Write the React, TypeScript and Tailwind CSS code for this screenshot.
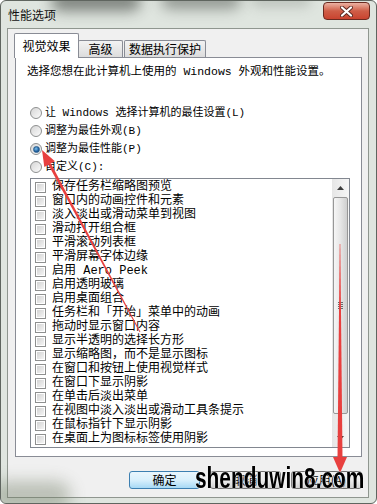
import React from "react";

const ITEMS = [
  "保存任务栏缩略图预览",
  "窗口内的动画控件和元素",
  "淡入淡出或滑动菜单到视图",
  "滑动打开组合框",
  "平滑滚动列表框",
  "平滑屏幕字体边缘",
  "启用 Aero Peek",
  "启用透明玻璃",
  "启用桌面组合",
  "任务栏和「开始」菜单中的动画",
  "拖动时显示窗口内容",
  "显示半透明的选择长方形",
  "显示缩略图，而不是显示图标",
  "在窗口和按钮上使用视觉样式",
  "在窗口下显示阴影",
  "在单击后淡出菜单",
  "在视图中淡入淡出或滑动工具条提示",
  "在鼠标指针下显示阴影",
  "在桌面上为图标标签使用阴影",
];

const RADIOS = [
  { label: "让 Windows 选择计算机的最佳设置(L)", checked: false },
  { label: "调整为最佳外观(B)", checked: false },
  { label: "调整为最佳性能(P)", checked: true },
  { label: "自定义(C):", checked: false },
];

function Radio({ checked }: { checked: boolean }) {
  return (
    <div className="w-[12px] h-[12px] rounded-full border border-[#8e9090] bg-gradient-to-br from-[#d6d6d6] to-[#fbfbfb] flex items-center justify-center shrink-0">
      {checked && (
        <div className="w-[7px] h-[7px] rounded-full bg-[radial-gradient(circle_at_40%_35%,#7fc3ef,#1f5f9e_60%,#123f70)] border border-[#2a5f8f]" />
      )}
    </div>
  );
}

function Checkbox() {
  return (
    <div className="w-[11px] h-[11px] border border-[#8e8f8f] bg-white p-[1px] shrink-0">
      <div className="w-full h-full bg-gradient-to-br from-[#d3d3d3] to-[#f4f4f4]" />
    </div>
  );
}

function Button({ label, primary }: { label: string; primary?: boolean }) {
  return (
    <div
      className={
        primary
          ? "w-[71px] h-[18px] rounded-[3px] border border-[#3c7fb1] bg-gradient-to-b from-[#eaf6fd] via-[#d9f0fc] to-[#a7d9f5] flex items-center justify-center text-[12px] leading-none"
          : "w-[71px] h-[18px] rounded-[3px] border border-[#707070] bg-gradient-to-b from-[#f2f2f2] via-[#ebebeb] to-[#cfcfcf] flex items-center justify-center text-[12px] leading-none"
      }
    >
      {label}
    </div>
  );
}

export default function App() {
  return (
    <div className="relative w-[377px] h-[504px] overflow-hidden rounded-[6px] border border-[#5f655f] bg-[#dfe5df] text-black font-['Liberation_Mono','Noto_Sans_CJK_SC',monospace]">
      {/* blurred glass behind the title */}
      <div className="absolute left-[50px] -top-[10px] w-[90px] h-[20px] rounded-full bg-[#3d423d] opacity-60 blur-[7px]" />
      <div className="absolute left-[160px] -top-[10px] w-[80px] h-[18px] rounded-full bg-[#454a45] opacity-50 blur-[7px]" />
      <div className="absolute left-[250px] -top-[8px] w-[60px] h-[14px] rounded-full bg-[#8a908a] opacity-40 blur-[6px]" />
      <div className="absolute -left-[10px] top-[480px] w-[80px] h-[30px] rounded-full bg-[#6e7a62] opacity-40 blur-[8px]" />

      {/* title bar */}
      <div className="relative h-[27px] flex items-start">
        <span className="ml-[7px] mt-[6px] text-[12px] leading-[16px] font-['Noto_Sans_CJK_SC',sans-serif] text-[#111]">
          性能选项
        </span>
        <div className="ml-auto mr-[6px] mt-[1px] w-[47px] h-[18px] rounded-[4px] border border-[#6b2a20] bg-gradient-to-b from-[#eab1a2] via-[#cf5d47] to-[#c9432f] flex items-center justify-center">
          <svg width="13" height="11" viewBox="0 0 13 11">
            <path
              d="M2 1.5 L11 9.5 M11 1.5 L2 9.5"
              stroke="#5a2a22"
              strokeWidth="4"
              strokeLinecap="round"
            />
            <path
              d="M2 1.5 L11 9.5 M11 1.5 L2 9.5"
              stroke="#ffffff"
              strokeWidth="2.2"
              strokeLinecap="round"
            />
          </svg>
        </div>
      </div>

      {/* dialog body */}
      <div className="ml-[6px] w-[362px] h-[470px] bg-[#f0f0f0] border border-[#8f968f] pl-[7px] pr-[6px] pt-[4px] flex flex-col">
        {/* tabs */}
        <div className="flex items-end h-[24px] text-[12px] font-['Noto_Sans_CJK_SC',sans-serif]">
          <div className="relative z-10 -ml-px -mb-px w-[65px] h-[25px] bg-white border border-b-0 border-[#898c95] rounded-t-[2px] flex items-center justify-center">
            视觉效果
          </div>
          <div className="-ml-px w-[45px] h-[17px] border border-b-0 border-[#898c95] rounded-t-[2px] bg-gradient-to-b from-[#f3f3f3] to-[#dcdcdc] flex items-center justify-center">
            高级
          </div>
          <div className="ml-px w-[82px] h-[17px] border border-b-0 border-[#898c95] rounded-t-[2px] bg-gradient-to-b from-[#f3f3f3] to-[#dcdcdc] flex items-center justify-center">
            数据执行保护
          </div>
        </div>

        {/* tab panel */}
        <div className="h-[400px] bg-white border border-[#898c95] px-[11px] flex flex-col">
          <p className="mt-[6px] text-[11.5px] leading-[16px]">
            选择您想在此计算机上使用的 Windows 外观和性能设置。
          </p>

          <div className="mt-[24px] flex flex-col">
            {RADIOS.map((r) => (
              <div key={r.label} className="h-[18px] pl-[3px] flex items-center gap-[3px] text-[11px] leading-none">
                <Radio checked={r.checked} />
                <span>{r.label}</span>
              </div>
            ))}
          </div>

          {/* list box */}
          <div className="mt-[2px] ml-[3px] w-[320px] h-[270px] border border-[#828790] bg-white flex">
            <div className="flex-1 overflow-hidden pt-[1px] pl-[4px]">
              {ITEMS.map((it) => (
                <div key={it} className="h-[14px] flex items-center gap-[6px] text-[12px] leading-none whitespace-nowrap">
                  <Checkbox />
                  <span>{it}</span>
                </div>
              ))}
            </div>
            {/* scrollbar */}
            <div className="w-[17px] bg-gradient-to-r from-[#e6e6e6] to-[#f6f6f6] flex flex-col">
              <div className="h-[18px] flex items-center justify-center">
                <svg width="7" height="4" viewBox="0 0 7 4">
                  <path d="M0 4 L3.5 0 L7 4 Z" fill="#3b3b3b" />
                </svg>
              </div>
              <div className="mx-[1px] h-[217px] rounded-[2px] border border-[#979797] bg-gradient-to-r from-[#f6f6f6] via-[#e6e6e6] to-[#cfcfcf] flex items-center justify-center">
                <div className="flex flex-col gap-[1px]">
                  <div className="w-[5px] h-px bg-[#6a6a6a]" />
                  <div className="w-[5px] h-px bg-[#6a6a6a]" />
                  <div className="w-[5px] h-px bg-[#6a6a6a]" />
                  <div className="w-[5px] h-px bg-[#6a6a6a]" />
                </div>
              </div>
              <div className="flex-1" />
              <div className="h-[18px] flex items-center justify-center">
                <svg width="7" height="4" viewBox="0 0 7 4">
                  <path d="M0 0 L3.5 4 L7 0 Z" fill="#3b3b3b" />
                </svg>
              </div>
            </div>
          </div>
        </div>

        {/* buttons */}
        <div className="mt-[14px] flex justify-end gap-[10px] font-['Noto_Sans_CJK_SC',sans-serif]">
          <Button label="确定" primary />
          <Button label="取消" />
          <Button label="应用(A)" />
        </div>
      </div>

      {/* red arrows drawn on the screenshot */}
      <svg className="absolute -left-px -top-px pointer-events-none z-20" width="377" height="504" viewBox="0 0 377 504">
        <polygon points="42,150 44.3,166.9 54.9,161.3" fill="#e8403f" />
        <polygon points="48.3,164.8 50.9,163.4 140.4,331.8 139.6,332.2" fill="#e8403f" />
        <polygon points="340,473 333,457 347,457" fill="#e8403f" />
        <polygon points="337.5,458 342.5,458 340.3,244 339.7,244" fill="#e8403f" />
      </svg>

      {/* watermark */}
      <div className="absolute left-[194px] top-[463px] z-30 origin-left scale-x-[0.72] text-[29px] leading-none font-bold font-['Liberation_Sans',sans-serif] text-black whitespace-nowrap [text-shadow:0_0_2px_#fff,0_0_1px_#fff]">
        shenduwin8.com
      </div>
    </div>
  );
}
